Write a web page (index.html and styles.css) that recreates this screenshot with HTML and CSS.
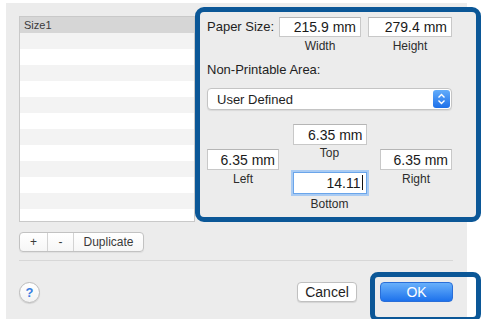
FILE: index.html
```html
<!DOCTYPE html>
<html lang="en">
<head>
    <meta charset="UTF-8">
    <title>Custom Paper Sizes</title>
    <link rel="stylesheet" href="styles.css">
</head>
<body>

    <div class="window">
        <div class="top">
            <div class="size-list">
                <div class="row selected">Size1</div>
                <div class="row alt"></div>
                <div class="row"></div>
                <div class="row alt"></div>
                <div class="row"></div>
                <div class="row alt"></div>
                <div class="row"></div>
                <div class="row alt"></div>
                <div class="row"></div>
                <div class="row alt"></div>
                <div class="row"></div>
                <div class="row alt"></div>
                <div class="row"></div>
            </div>

            <div class="panel">
                <div class="paper-row">
                    <div class="label paper-label">Paper Size:</div>
                    <div class="group">
                        <div class="field wide">215.9 mm</div>
                        <div class="caption">Width</div>
                    </div>
                    <div class="group">
                        <div class="field wider">279.4 mm</div>
                        <div class="caption">Height</div>
                    </div>
                </div>

                <div class="label area-label">Non-Printable Area:</div>

                <div class="popup">
                    <span>User Defined</span>
                    <span class="stepper">
                        <svg width="9" height="12" viewBox="0 0 9 12">
                            <path d="M1.5 4.5 L4.5 1.5 L7.5 4.5 M1.5 7.5 L4.5 10.5 L7.5 7.5" fill="none" stroke="#fff" stroke-width="1.4"/>
                        </svg>
                    </span>
                </div>

                <div class="margins">
                    <div class="side">
                        <div class="field small">6.35 mm</div>
                        <div class="caption">Left</div>
                    </div>
                    <div class="middle">
                        <div class="field small">6.35 mm</div>
                        <div class="caption">Top</div>
                        <div class="field small focused">14.11<span class="caret"></span></div>
                        <div class="caption">Bottom</div>
                    </div>
                    <div class="side">
                        <div class="field small">6.35 mm</div>
                        <div class="caption">Right</div>
                    </div>
                </div>
            </div>
        </div>

        <div class="segmented">
            <button class="seg plus">+</button>
            <button class="seg minus">-</button>
            <button class="seg dup">Duplicate</button>
        </div>

        <div class="separator"></div>

        <div class="footer">
            <button class="help">?</button>
            <button class="btn cancel">Cancel</button>
            <div class="ok-wrap">
                <button class="btn ok">OK</button>
                <div class="callout"></div>
            </div>
        </div>
    </div>

</body>
</html>
```

FILE: styles.css
```css
body {
    margin: 0;
    background: #fff;
    font-family: "Liberation Sans", Arial, sans-serif;
    color: #1e1e1e;
}
.window {
    position: relative;
    margin: 3px 0 0 6px;
    width: 461px;
    height: 316px;
    padding: 0 14px 0 13px;
    box-sizing: border-box;
    background: #ececec;
    display: flex;
    flex-direction: column;
}
.top {
    display: flex;
    align-items: flex-start;
}
.size-list {
    flex-shrink: 0;
    margin-top: 13px;
    width: 176px;
    height: 206px;
    box-sizing: border-box;
    border: 1px solid #c9c9c9;
    background: #fff;
    overflow: hidden;
}
.row {
    height: 16px;
    line-height: 16px;
    padding-left: 4px;
    font-size: 11px;
    color: #3a3a3a;
}
.row.alt { background: #f3f3f3; }
.row.selected { background: #d6d6d6; }

.panel {
    flex-shrink: 0;
    margin-top: 4px;
    width: 286px;
    height: 215px;
    box-sizing: border-box;
    border: 5px solid #0b5797;
    border-radius: 9px;
    padding: 5px 24px 0 7px;
    background: #ececec;
}
.label {
    font-size: 13px;
    line-height: 20px;
    white-space: nowrap;
}
.paper-row {
    display: flex;
    gap: 7px;
}
.paper-label {
    width: 72px;
    flex-shrink: 0;
    margin-right: -7px;
}
.group {
    display: flex;
    flex-direction: column;
    align-items: center;
}
.field {
    height: 20px;
    box-sizing: border-box;
    background: #fff;
    border: 1px solid #c8c8c8;
    border-top-color: #b5b5b5;
    text-align: right;
    padding-right: 4px;
    font-size: 14px;
    line-height: 19px;
    color: #1a1a1a;
    white-space: nowrap;
}
.wide { width: 82px; }
.wider { width: 84px; }
.small {
    height: 21px;
    line-height: 20px;
    padding-right: 3px;
}
.caption {
    margin-top: 2px;
    font-size: 12px;
    line-height: 14px;
    color: #2c2c2c;
}
.area-label {
    margin-top: 7px;
}
.popup {
    margin-top: 8px;
    height: 22px;
    box-sizing: border-box;
    background: #fff;
    border: 1px solid #c4c4c4;
    border-radius: 4px;
    box-shadow: 0 1px 1px rgba(0, 0, 0, 0.08);
    display: flex;
    align-items: center;
    justify-content: space-between;
    padding: 0 1px 0 9px;
    font-size: 13px;
}
.stepper {
    width: 17px;
    height: 18px;
    border-radius: 3px;
    background: linear-gradient(#63adfb, #1c6fe9);
    display: flex;
    align-items: center;
    justify-content: center;
}
.margins {
    margin-top: 14px;
    display: grid;
    grid-template-columns: 72px 1fr 72px;
}
.side {
    padding-top: 25px;
    display: flex;
    flex-direction: column;
    align-items: center;
}
.side .field { width: 72px; }
.middle {
    display: flex;
    flex-direction: column;
    align-items: center;
}
.middle .field { width: 74px; }
.middle .caption { margin-top: 1px; }
.middle .focused {
    margin-top: 12px;
    height: 22px;
    border: 1px solid #6aa5ea;
    box-shadow: 0 0 0 2px #a9cbf3;
}
.caret {
    display: inline-block;
    width: 1px;
    height: 15px;
    margin-left: 1px;
    vertical-align: -2px;
    background: #111;
}
.middle .focused + .caption { margin-top: 3px; }

.segmented {
    margin-top: 10px;
    display: flex;
    width: 125px;
    height: 20px;
    box-sizing: border-box;
    border: 1px solid #c2c2c2;
    border-radius: 4px;
    background: linear-gradient(#fff, #f6f6f6);
    box-shadow: 0 1px 1px rgba(0, 0, 0, 0.06);
    overflow: hidden;
}
button {
    font-family: "Liberation Sans", Arial, sans-serif;
    margin: 0;
    padding: 0;
    cursor: pointer;
}
.seg {
    border: none;
    border-right: 1px solid #d3d3d3;
    background: transparent;
    font-size: 12px;
    color: #3a3a3a;
    height: 18px;
}
.plus { width: 28px; }
.minus { width: 26px; }
.dup { flex: 1; border-right: none; }

.separator {
    margin-top: 8px;
    height: 1px;
    background: #d7d7d7;
}
.footer {
    margin-top: 20px;
    display: flex;
    align-items: center;
}
.help {
    width: 21px;
    height: 21px;
    margin-top: 1px;
    border-radius: 50%;
    border: 1px solid #bcbcbc;
    background: linear-gradient(#fff, #f3f3f3);
    box-shadow: 0 1px 1px rgba(0, 0, 0, 0.12);
    color: #3a7de0;
    font-weight: bold;
    font-size: 13px;
}
.btn {
    height: 20px;
    border-radius: 4px;
    font-size: 14px;
}
.cancel {
    margin-left: auto;
    width: 60px;
    background: #fff;
    border: 1px solid #c0c0c0;
    box-shadow: 0 1px 1px rgba(0, 0, 0, 0.1);
    color: #1e1e1e;
}
.ok-wrap {
    position: relative;
    margin-left: 23px;
    height: 20px;
}
.ok {
    display: block;
    width: 73px;
    border: 1px solid #2a6fd8;
    background: linear-gradient(#68b0fb, #1d72ec);
    color: #fff;
}
.callout {
    position: absolute;
    left: -10px;
    top: -10px;
    width: 111px;
    height: 50px;
    box-sizing: border-box;
    border: 5px solid #0b5797;
    border-radius: 8px;
}
```
